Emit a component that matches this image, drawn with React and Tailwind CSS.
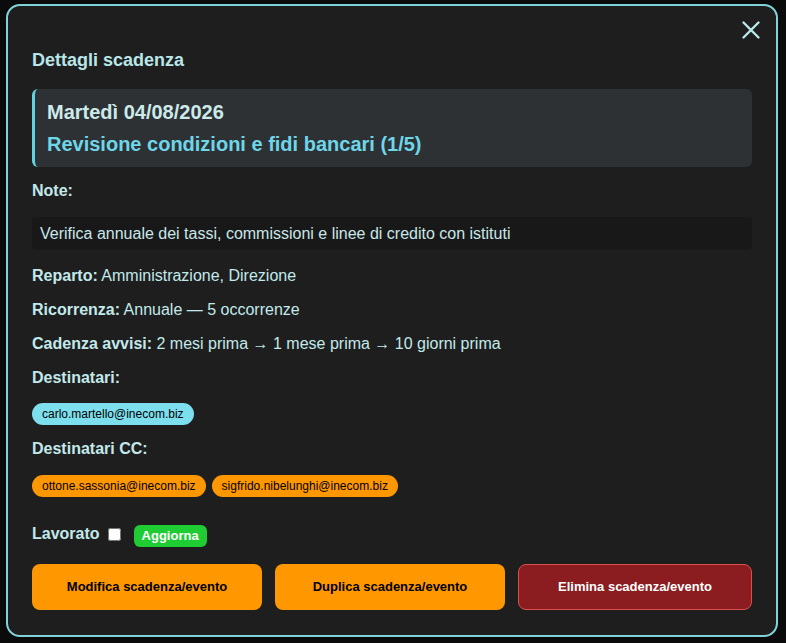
import React, { useState } from 'react';

const font = { fontFamily: '"Liberation Sans", Arial, sans-serif' };

function Row({ label, children }) {
  return (
    <p className="text-[16px] leading-[20px] text-[#c3e9eb]">
      <span className="font-bold">{label}</span> {children}
    </p>
  );
}

function Chip({ children, color }) {
  return (
    <span className={`inline-flex items-center h-[22px] px-[10px] rounded-full text-[12px] text-black ${color}`}>
      {children}
    </span>
  );
}

export default function App() {
  const [done, setDone] = useState(false);

  return (
    <div className="min-h-screen bg-[#0b0b0b] flex items-start justify-start pt-[4px] pl-[6px]" style={font}>
      <div className="relative w-[772px] rounded-[14px] border-2 border-[#7fd3d9] bg-[#1e1e1e] px-6 pt-[43px] pb-[25px]">
        <button className="absolute right-[15px] top-[14px] text-[#b9e8ea]" aria-label="Chiudi">
          <svg width="20" height="20" viewBox="0 0 20 20" fill="none" stroke="currentColor" strokeWidth="2.4" strokeLinecap="round">
            <path d="M2.5 2.5 L17.5 17.5 M17.5 2.5 L2.5 17.5" />
          </svg>
        </button>

        <h2 className="text-[18px] leading-[22px] font-bold text-[#b9e6e8]">Dettagli scadenza</h2>

        <div className="mt-[18px] rounded-[6px] border-l-[3px] border-[#62d2e0] bg-[#2d3133] pl-[12px] pt-[7px] pb-[7px]">
          <div className="text-[20px] leading-[32px] font-bold text-[#cdeaea]">Martedì 04/08/2026</div>
          <div className="text-[20px] leading-[32px] font-bold text-[#6fd6ea]">Revisione condizioni e fidi bancari (1/5)</div>
        </div>

        <p className="mt-[14px] text-[16px] leading-[20px] font-bold text-[#c3e9eb]">Note:</p>
        <div className="mt-[16px] h-[33px] flex items-center rounded-[4px] bg-[#181818] px-[8px] text-[16px] text-[#c9e6e8]">
          Verifica annuale dei tassi, commissioni e linee di credito con istituti
        </div>

        <div className="mt-[16px] flex flex-col gap-[14px]">
          <Row label="Reparto:">Amministrazione, Direzione</Row>
          <Row label="Ricorrenza:">Annuale — 5 occorrenze</Row>
          <Row label="Cadenza avvisi:">2 mesi prima → 1 mese prima → 10 giorni prima</Row>
          <Row label="Destinatari:"></Row>
        </div>

        <div className="mt-[15px] flex gap-[6px]">
          <Chip color="bg-[#7ddfee]">carlo.martello@inecom.biz</Chip>
        </div>

        <p className="mt-[14px] text-[16px] leading-[20px] font-bold text-[#c3e9eb]">Destinatari CC:</p>
        <div className="mt-[16px] flex gap-[6px]">
          <Chip color="bg-[#ff9800]">ottone.sassonia@inecom.biz</Chip>
          <Chip color="bg-[#ff9800]">sigfrido.nibelunghi@inecom.biz</Chip>
        </div>

        <div className="mt-[28px] flex items-center h-[22px]">
          <span className="text-[16px] leading-[20px] font-bold text-[#c3e9eb] mb-[5px]">Lavorato</span>
          <input
            type="checkbox"
            checked={done}
            onChange={(e) => setDone(e.target.checked)}
            className="ml-[8px] w-[13px] h-[13px] mb-[3px]"
          />
          <button className="ml-[13px] h-[22px] px-[8px] rounded-[6px] bg-[#1fcc33] text-white text-[13px] font-bold">
            Aggiorna
          </button>
        </div>

        <div className="mt-[17px] flex gap-[13px]">
          <button className="w-[230px] h-[46px] rounded-[8px] bg-[#ff9800] text-black text-[13px] font-bold">
            Modifica scadenza/evento
          </button>
          <button className="w-[230px] h-[46px] rounded-[8px] bg-[#ff9800] text-black text-[13px] font-bold">
            Duplica scadenza/evento
          </button>
          <button className="flex-1 h-[46px] rounded-[8px] bg-[#8b1c1f] border border-[#d9504f] text-white text-[13px] font-bold">
            Elimina scadenza/evento
          </button>
        </div>
      </div>
    </div>
  );
}
